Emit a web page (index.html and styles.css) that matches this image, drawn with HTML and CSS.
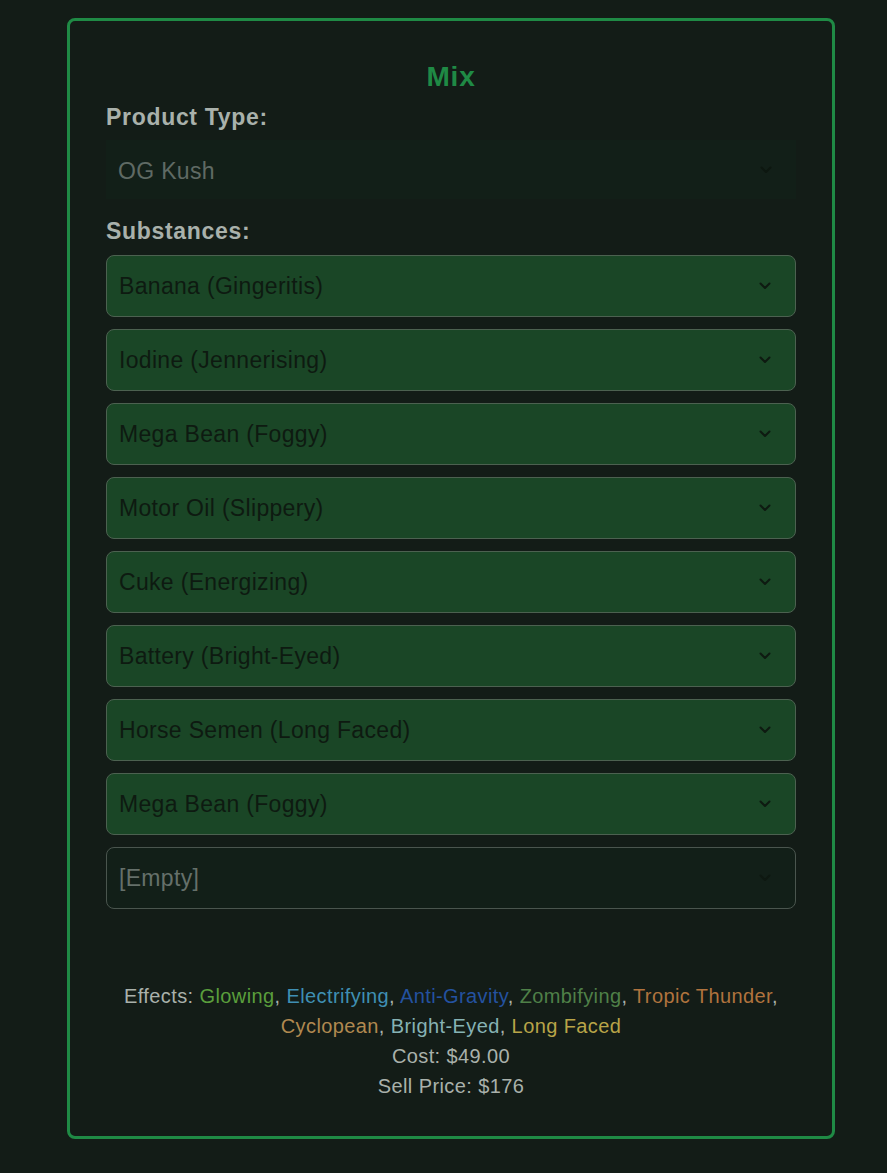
FILE: index.html
```html
<!DOCTYPE html>
<html lang="en">
<head>
<meta charset="utf-8">
<title>Mix</title>
<link rel="stylesheet" href="styles.css">
</head>
<body>
<main class="card">
  <h2 class="title">Mix</h2>
  <div class="label">Product Type:</div>
  <div class="select product">
    <span class="value">OG Kush</span>
    <svg class="chev" width="12" height="8" viewBox="0 0 12 8"><path d="M1.5 1.5 L6 6 L10.5 1.5" fill="none" stroke="currentColor" stroke-width="2" stroke-linecap="round" stroke-linejoin="round"/></svg>
  </div>
  <div class="label subs">Substances:</div>
  <div class="list">
    <div class="select filled"><span class="value">Banana (Gingeritis)</span><svg class="chev" width="12" height="8" viewBox="0 0 12 8"><path d="M1.5 1.5 L6 6 L10.5 1.5" fill="none" stroke="currentColor" stroke-width="2" stroke-linecap="round" stroke-linejoin="round"/></svg></div>
    <div class="select filled"><span class="value">Iodine (Jennerising)</span><svg class="chev" width="12" height="8" viewBox="0 0 12 8"><path d="M1.5 1.5 L6 6 L10.5 1.5" fill="none" stroke="currentColor" stroke-width="2" stroke-linecap="round" stroke-linejoin="round"/></svg></div>
    <div class="select filled"><span class="value">Mega Bean (Foggy)</span><svg class="chev" width="12" height="8" viewBox="0 0 12 8"><path d="M1.5 1.5 L6 6 L10.5 1.5" fill="none" stroke="currentColor" stroke-width="2" stroke-linecap="round" stroke-linejoin="round"/></svg></div>
    <div class="select filled"><span class="value">Motor Oil (Slippery)</span><svg class="chev" width="12" height="8" viewBox="0 0 12 8"><path d="M1.5 1.5 L6 6 L10.5 1.5" fill="none" stroke="currentColor" stroke-width="2" stroke-linecap="round" stroke-linejoin="round"/></svg></div>
    <div class="select filled"><span class="value">Cuke (Energizing)</span><svg class="chev" width="12" height="8" viewBox="0 0 12 8"><path d="M1.5 1.5 L6 6 L10.5 1.5" fill="none" stroke="currentColor" stroke-width="2" stroke-linecap="round" stroke-linejoin="round"/></svg></div>
    <div class="select filled"><span class="value">Battery (Bright-Eyed)</span><svg class="chev" width="12" height="8" viewBox="0 0 12 8"><path d="M1.5 1.5 L6 6 L10.5 1.5" fill="none" stroke="currentColor" stroke-width="2" stroke-linecap="round" stroke-linejoin="round"/></svg></div>
    <div class="select filled"><span class="value">Horse Semen (Long Faced)</span><svg class="chev" width="12" height="8" viewBox="0 0 12 8"><path d="M1.5 1.5 L6 6 L10.5 1.5" fill="none" stroke="currentColor" stroke-width="2" stroke-linecap="round" stroke-linejoin="round"/></svg></div>
    <div class="select filled"><span class="value">Mega Bean (Foggy)</span><svg class="chev" width="12" height="8" viewBox="0 0 12 8"><path d="M1.5 1.5 L6 6 L10.5 1.5" fill="none" stroke="currentColor" stroke-width="2" stroke-linecap="round" stroke-linejoin="round"/></svg></div>
    <div class="select empty"><span class="value">[Empty]</span><svg class="chev" width="12" height="8" viewBox="0 0 12 8"><path d="M1.5 1.5 L6 6 L10.5 1.5" fill="none" stroke="currentColor" stroke-width="2" stroke-linecap="round" stroke-linejoin="round"/></svg></div>
  </div>
  <div class="result">
    <p class="line">Effects: <span class="fx glowing">Glowing</span>, <span class="fx electrifying">Electrifying</span>, <span class="fx antigravity">Anti-Gravity</span>, <span class="fx zombifying">Zombifying</span>, <span class="fx tropic">Tropic Thunder</span>, <span class="fx cyclopean">Cyclopean</span>, <span class="fx brighteyed">Bright-Eyed</span>, <span class="fx longfaced">Long Faced</span></p>
    <p class="line">Cost: $49.00</p>
    <p class="line">Sell Price: $176</p>
  </div>
</main>
</body>
</html>
```
FILE: styles.css
```css
html, body {
  margin: 0;
  padding: 0;
  background: #131c17;
}
body {
  font-family: "Liberation Sans", Arial, sans-serif;
  color: #a9b1ab;
  padding: 18px 0 34px 67px;
  letter-spacing: 0.02em;
}
.card {
  box-sizing: border-box;
  width: 768px;
  border: 3px solid #1f8a45;
  border-radius: 8px;
  padding: 40px 36px 35px;
  display: flex;
  flex-direction: column;
}
.title {
  margin: 0;
  text-align: center;
  font-size: 28px;
  line-height: 32px;
  font-weight: bold;
  color: #1f8a45;
  letter-spacing: 0.03em;
}
.label {
  margin-top: 12px;
  font-size: 23px;
  line-height: 24px;
  font-weight: bold;
  color: #a9b1ab;
  letter-spacing: 0.03em;
}
.label.subs {
  margin-top: 20px;
}
.select {
  box-sizing: border-box;
  display: flex;
  align-items: center;
  justify-content: space-between;
  font-size: 23px;
  border-radius: 8px;
}
.select .chev {
  margin-right: 24px;
  flex: none;
}
.product {
  margin-top: 11px;
  height: 59px;
  padding-left: 12px;
  padding-top: 3px;
  background: #121f18;
  border-radius: 0;
  color: #5f6a64;
}
.product .chev {
  color: #0d1710;
  margin-top: -3px;
}
.list {
  margin-top: 12px;
  display: flex;
  flex-direction: column;
  gap: 12px;
}
.filled, .empty {
  height: 62px;
  padding-left: 12px;
  border: 1px solid #4c6150;
}
.filled {
  background: #1a4626;
  color: #0e1a11;
}
.filled .chev {
  color: #0e1a11;
}
.empty {
  background: #121f18;
  color: #65706a;
  border-color: #4a554e;
}
.empty .chev {
  color: #0e1811;
}
.result {
  margin-top: 72px;
  text-align: center;
  font-size: 20px;
  letter-spacing: 0.02em;
}
.line {
  margin: 0;
  line-height: 30px;
}
.glowing { color: #5a9e3c; }
.electrifying { color: #3f8fb3; }
.antigravity { color: #2452a0; }
.zombifying { color: #4f8048; }
.tropic { color: #b0733e; }
.cyclopean { color: #b08950; }
.brighteyed { color: #86b2b4; }
.longfaced { color: #b8a448; }
```
